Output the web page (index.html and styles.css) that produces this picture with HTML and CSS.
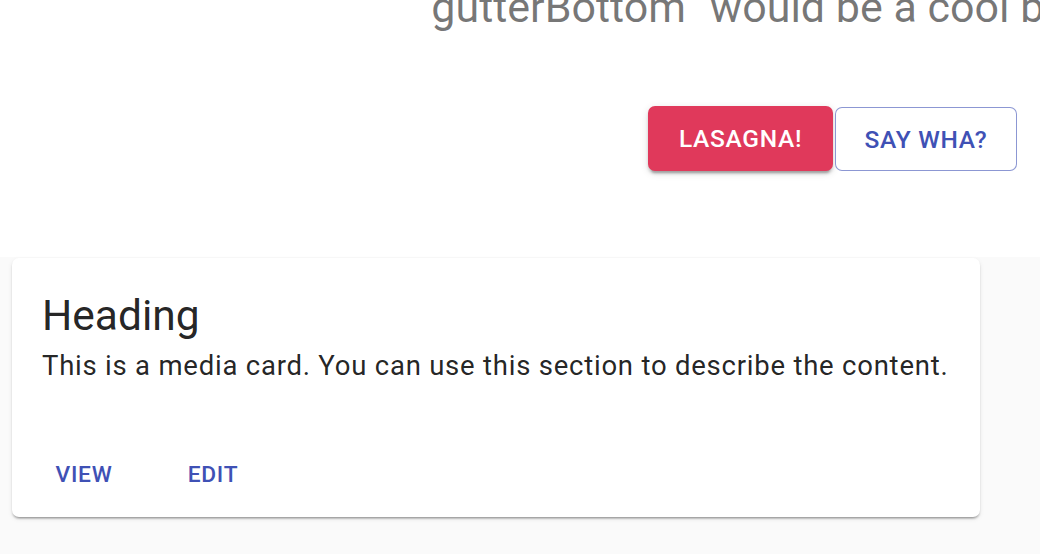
FILE: index.html
```html
<!DOCTYPE html>
<html>
<head>
<meta charset="utf-8">
<link rel="stylesheet" href="styles.css">
</head>
<body>
<section class="top">
  <p class="caption">`gutterBottom` would be a cool bonus for buttons too</p>
  <div class="actions-row">
    <button class="btn btn-contained">Lasagna!</button>
    <button class="btn btn-outlined">Say wha?</button>
  </div>
</section>
<section class="bottom">
  <div class="card">
    <div class="card-content">
      <h2 class="card-title">Heading</h2>
      <p class="card-text">This is a media card. You can use this section to describe the content.</p>
    </div>
    <div class="card-actions">
      <button class="btn-text">View</button>
      <button class="btn-text">Edit</button>
    </div>
  </div>
</section>
</body>
</html>
```
FILE: styles.css
```css
* { box-sizing: border-box; }
html, body { margin: 0; padding: 0; }
body {
  font-family: Roboto, "Liberation Sans", sans-serif;
  background: #fafafa;
  width: 1040px;
  height: 554px;
  overflow: hidden;
}
.top {
  background: #fff;
  height: 257px;
  overflow: hidden;
}
.caption {
  margin: -21px 0 0 0;
  padding-left: 418px;
  font-size: 43px;
  line-height: 56px;
  color: rgba(0,0,0,0.54);
  white-space: nowrap;
  overflow: hidden;
}
.actions-row {
  display: flex;
  justify-content: flex-end;
  gap: 2px;
  padding-right: 23px;
  margin-top: 71px;
}
.btn {
  font-family: Roboto, "Liberation Sans", sans-serif;
  font-size: 24.5px;
  font-weight: 500;
  letter-spacing: 0.7px;
  text-transform: uppercase;
  height: 65px;
  border-radius: 7px;
  cursor: pointer;
}
.btn-contained {
  width: 185px;
  background: #e0395b;
  color: #fff;
  border: none;
  box-shadow: 0 5px 2px -3px rgba(0,0,0,0.2), 0 3px 3px 0 rgba(0,0,0,0.14), 0 2px 8px 0 rgba(0,0,0,0.12);
}
.btn-outlined {
  width: 182px;
  background: #fff;
  color: #3f51b5;
  border: 1.5px solid rgba(63,81,181,0.6);
  margin-top: 1px;
  height: 64px;
}
.bottom {
  padding: 1px 60px 0 12px;
}
.card {
  background: #fff;
  width: 968px;
  border-radius: 7px;
  box-shadow: 0 3px 2px -2px rgba(0,0,0,0.25), 0 2px 2px 0 rgba(0,0,0,0.14), 0 2px 5px 0 rgba(0,0,0,0.08);
}
.card-content {
  padding: 30px 30px 0 30px;
}
.card-title {
  margin: 0;
  font-size: 42.5px;
  font-weight: 400;
  line-height: 56px;
  color: rgba(0,0,0,0.87);
}
.card-text {
  margin: 3px 0 0 0;
  font-size: 27.5px;
  line-height: 38px;
  letter-spacing: 0.77px;
  color: rgba(0,0,0,0.87);
}
.card-actions {
  display: flex;
  gap: 17px;
  padding: 63px 14px 17px 16px;
}
.btn-text {
  font-family: Roboto, "Liberation Sans", sans-serif;
  font-size: 22.75px;
  font-weight: 500;
  letter-spacing: 0.7px;
  text-transform: uppercase;
  color: #3f51b5;
  background: transparent;
  border: none;
  width: 112px;
  height: 52px;
  padding: 0;
  cursor: pointer;
}
```
